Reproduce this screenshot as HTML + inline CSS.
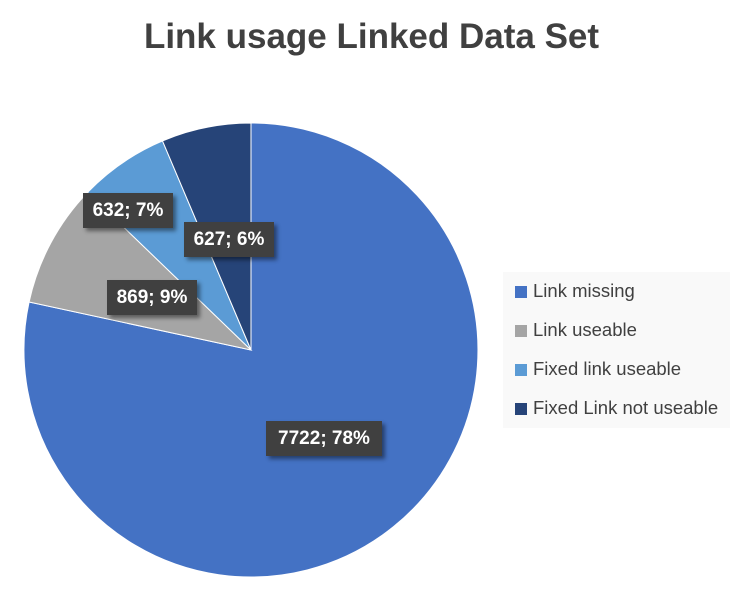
<!DOCTYPE html>
<html><head><style>
body{margin:0;width:743px;height:614px;background:#fff;font-family:"Liberation Sans",sans-serif;overflow:hidden;position:relative}
.t{position:absolute;left:0;width:743px;top:17px;text-align:center;font-size:35px;font-weight:bold;color:#404040}
.l{position:absolute;background:#404040;color:#fff;font-weight:bold;font-size:19px;height:35px;line-height:35px;text-align:center;box-shadow:3px 3px 4px rgba(0,0,0,.45)}
.lg{position:absolute;left:503px;top:272px;width:227px;height:156px;background:#f9f9f9}
.it{position:absolute;left:12px;font-size:18.5px;color:#404040}
.it i{display:inline-block;width:12px;height:12px;margin-right:6px;vertical-align:-1px}
</style></head><body>
<div class="t">Link usage Linked Data Set</div>
<svg width="743" height="614" style="position:absolute;left:0;top:0">
<path d="M251 350 L251 123 A227 227 0 1 1 29.1 302 Z" fill="#4472c4" stroke="#fff" stroke-width="1"/>
<path d="M251 350 L29.1 302 A227 227 0 0 1 87.6 192.4 Z" fill="#a5a5a5" stroke="#fff" stroke-width="1"/>
<path d="M251 350 L87.6 192.4 A227 227 0 0 1 162.5 140.9 Z" fill="#5b9bd5" stroke="#fff" stroke-width="1"/>
<path d="M251 350 L162.5 140.9 A227 227 0 0 1 251 123 Z" fill="#264478" stroke="#fff" stroke-width="1"/>
</svg>
<div class="l" style="left:83px;top:193px;width:90px">632; 7%</div>
<div class="l" style="left:184px;top:222px;width:90px">627; 6%</div>
<div class="l" style="left:107px;top:280px;width:90px">869; 9%</div>
<div class="l" style="left:266px;top:421px;width:116px">7722; 78%</div>
<div class="lg">
<div class="it" style="top:8px"><i style="background:#4472c4"></i>Link missing</div>
<div class="it" style="top:47px"><i style="background:#a5a5a5"></i>Link useable</div>
<div class="it" style="top:86px"><i style="background:#5b9bd5"></i>Fixed link useable</div>
<div class="it" style="top:125px"><i style="background:#264478"></i>Fixed Link not useable</div>
</div>
</body></html>
